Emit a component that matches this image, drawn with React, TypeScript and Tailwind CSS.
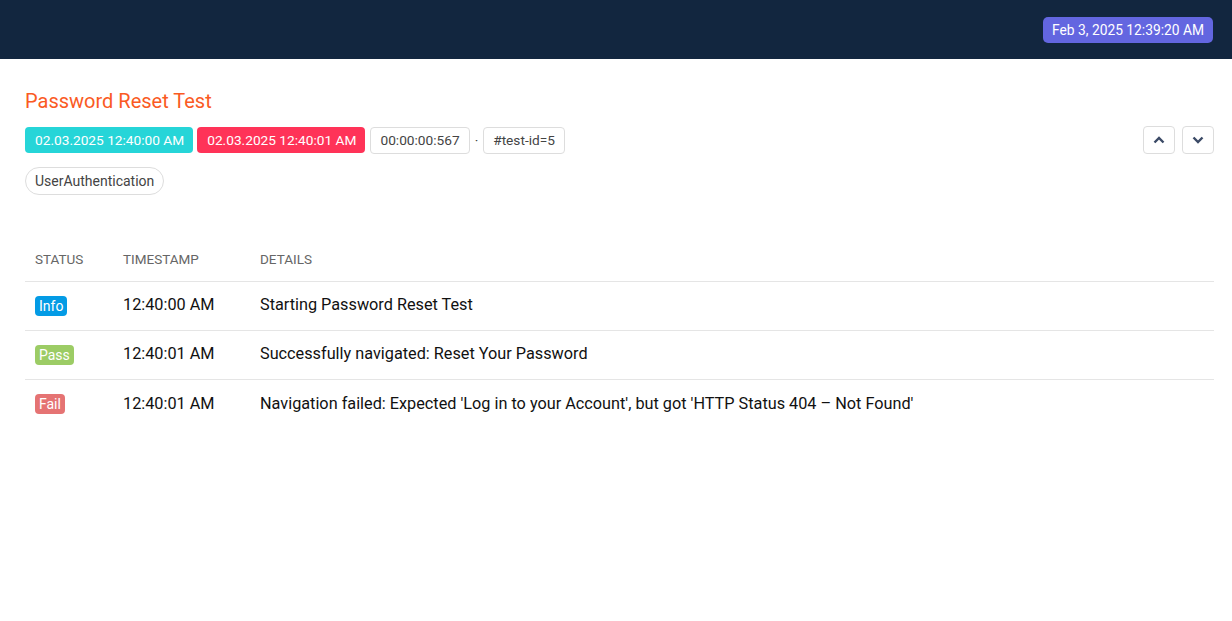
import React from "react";

const rows = [
  { status: "Info", cls: "bg-[#039be5]", time: "12:40:00 AM", details: "Starting Password Reset Test" },
  { status: "Pass", cls: "bg-[#9ccc65]", time: "12:40:01 AM", details: "Successfully navigated: Reset Your Password" },
  { status: "Fail", cls: "bg-[#e57373]", time: "12:40:01 AM", details: "Navigation failed: Expected 'Log in to your Account', but got 'HTTP Status 404 – Not Found'" },
];

export default function App() {
  return (
    <div className="min-h-[621px] bg-white font-['Roboto',sans-serif] text-[#111]">
      <header className="h-[59px] bg-[#12263f] flex items-center justify-end pr-[19px]">
        <span className="bg-[#6366e0] text-white text-[13.8px] leading-[26px] h-[26px] px-[9px] rounded-[5px]">Feb 3, 2025 12:39:20 AM</span>
      </header>
      <main className="pl-[25px] pr-[18px] pt-[30px]">
        <h1 className="text-[#fa5a23] text-[20px] leading-[24px]">Password Reset Test</h1>
        <div className="mt-[13px] flex items-center justify-between">
          <div className="flex items-center gap-[4px] text-[13.7px]">
            <span className="bg-[#26d5d8] text-white h-[26px] leading-[26px] pl-[10px] pr-[9px] rounded-[4px]">02.03.2025 12:40:00 AM</span>
            <span className="bg-[#ff3358] text-white h-[26px] leading-[26px] pl-[10px] pr-[9px] rounded-[4px]">02.03.2025 12:40:01 AM</span>
            <span className="ml-[1px] border border-[#ddd] text-[#444] h-[27px] leading-[25px] px-[9px] rounded-[4px]">00:00:00:567</span>
            <span className="text-[#444] px-[1px]">·</span>
            <span className="border border-[#ddd] text-[#444] h-[27px] leading-[25px] px-[9px] rounded-[4px]">#test-id=5</span>
          </div>
          <div className="flex items-center gap-[7px]">
            <button className="w-[32px] h-[28px] border border-[#ddd] rounded-[4px] flex items-center justify-center">
              <svg width="12" height="8" viewBox="0 0 12 8"><path d="M1.5 6.5 L6 2 L10.5 6.5" fill="none" stroke="#3b4a66" strokeWidth="2.4" /></svg>
            </button>
            <button className="w-[32px] h-[28px] border border-[#ddd] rounded-[4px] flex items-center justify-center">
              <svg width="12" height="8" viewBox="0 0 12 8"><path d="M1.5 1.5 L6 6 L10.5 1.5" fill="none" stroke="#3b4a66" strokeWidth="2.4" /></svg>
            </button>
          </div>
        </div>
        <div className="mt-[13px]">
          <span className="inline-block border border-[#ddd] text-[#444] text-[14px] h-[28px] leading-[26px] px-[9px] rounded-full">UserAuthentication</span>
        </div>
        <table className="mt-[42px] w-full border-collapse">
          <thead>
            <tr className="border-b border-[#e5e5e5] text-left text-[13.5px] text-[#666] uppercase">
              <th className="font-normal px-[10px] h-[44px] w-[88px]">Status</th>
              <th className="font-normal px-[10px] h-[44px] w-[137px]">Timestamp</th>
              <th className="font-normal px-[10px] h-[44px]">Details</th>
            </tr>
          </thead>
          <tbody>
            {rows.map((r, i) => (
              <tr key={i} className="border-b border-[#e5e5e5] last:border-b-0 text-[16.25px]">
                <td className="px-[10px] h-[49px]">
                  <span className={`${r.cls} text-white text-[14px] px-[4px] h-[20px] leading-[20px] inline-block align-middle rounded-[4px]`}>{r.status}</span>
                </td>
                <td className="px-[10px] h-[49px]">{r.time}</td>
                <td className="px-[10px] h-[49px]">{r.details}</td>
              </tr>
            ))}
          </tbody>
        </table>
      </main>
    </div>
  );
}
